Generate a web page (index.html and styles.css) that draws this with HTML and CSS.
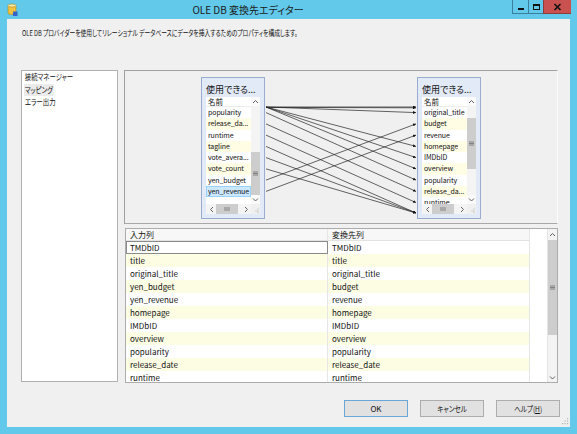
FILE: index.html
```html
<!DOCTYPE html>
<html lang="ja">
<head>
<meta charset="utf-8">
<title>OLE DB 変換先エディター</title>
<link rel="stylesheet" href="styles.css">
</head>
<body>
<div class="window">
  <div class="titlebar">
    <span class="app-icon">
      <svg width="11" height="13" viewBox="0 0 11 13">
        <path d="M1 2.5 V10 A4 1.5 0 0 0 9 10 V2.5" fill="#f0c23e" stroke="#a98a2c" stroke-width="0.6"/>
        <ellipse cx="5" cy="2.5" rx="4" ry="1.5" fill="#fae9a0" stroke="#a98a2c" stroke-width="0.6"/>
        <rect x="6" y="8.5" width="4.5" height="4.5" fill="#3563c9"/>
      </svg>
    </span>
    <span class="title">OLE DB 変換先エディター</span>
    <div class="caption">
      <span class="cb cb-min"><svg width="8" height="8" viewBox="0 0 8 8"><rect x="1" y="5" width="6" height="2" fill="#111"/></svg></span>
      <span class="cb cb-max"><svg width="9" height="8" viewBox="0 0 9 8"><rect x="1.5" y="1.5" width="6" height="5" fill="none" stroke="#111" stroke-width="1"/><rect x="1" y="1" width="7" height="2" fill="#111"/></svg></span>
      <span class="cb cb-close"><svg width="9" height="8" viewBox="0 0 9 8"><path d="M1.5 1 L7.5 7 M7.5 1 L1.5 7" stroke="#111" stroke-width="1.6"/></svg></span>
    </div>
  </div>

  <div class="client">
    <div class="desc"><span class="desc-text">OLE DB プロバイダーを使用してリレーショナル データベースにデータを挿入するためのプロパティを構成します。</span></div>

    <div class="main">
      <ul class="nav">
        <li><span class="nav-text">接続マネージャー</span></li>
        <li class="sel"><span class="nav-text">マッピング</span></li>
        <li><span class="nav-text">エラー出力</span></li>
      </ul>

      <div class="panel">
        <div class="diagram">
          <svg class="links" width="432" height="151" viewBox="0 0 432 151">
            <defs>
              <marker id="arr" markerWidth="3" markerHeight="3" refX="3" refY="1.5" orient="auto" markerUnits="userSpaceOnUse">
                <path d="M0 0 L3 1.5 L0 3 Z" fill="#111"/>
              </marker>
            </defs>
            <g stroke="#222" stroke-width="0.7" fill="none" marker-end="url(#arr)">
              <line x1="141" y1="36" x2="291" y2="36"/>
              <line x1="141" y1="36.4" x2="291" y2="36.8"/>
              <line x1="141" y1="36" x2="291" y2="41.6"/>
              <line x1="141" y1="36" x2="291" y2="75.4"/>
              <line x1="141" y1="36" x2="291" y2="86.6"/>
              <line x1="141" y1="36" x2="291" y2="97.9"/>
              <line x1="141" y1="41.6" x2="291" y2="109.1"/>
              <line x1="141" y1="52.9" x2="291" y2="120.4"/>
              <line x1="141" y1="64.1" x2="291" y2="131.6"/>
              <line x1="141" y1="75.4" x2="291" y2="142"/>
              <line x1="141" y1="86.6" x2="291" y2="142"/>
              <line x1="141" y1="97.9" x2="291" y2="142"/>
              <line x1="141" y1="109.1" x2="291" y2="52.9"/>
              <line x1="141" y1="120.4" x2="291" y2="64.1"/>
            </g>
          </svg>

          <div class="node node-left">
            <div class="node-title">使用できる...</div>
            <div class="node-body">
              <div class="node-list">
                <div class="node-items">
                  <div class="node-colhead">名前</div>
                  <div class="node-row">popularity</div>
                  <div class="node-row alt">release_da...</div>
                  <div class="node-row">runtime</div>
                  <div class="node-row alt">tagline</div>
                  <div class="node-row">vote_avera...</div>
                  <div class="node-row alt">vote_count</div>
                  <div class="node-row">yen_budget</div>
                  <div class="node-row selected">yen_revenue</div>
                </div>
                <div class="vs">
                  <span class="vs-arrow"><svg width="7" height="5" viewBox="0 0 7 5"><path d="M1 4 L3.5 1.5 L6 4" fill="none" stroke="#606060"/></svg></span>
                  <span class="vs-thumb"><svg width="5" height="5" viewBox="0 0 5 5"><path d="M0 1 H5 M0 2.5 H5 M0 4 H5" stroke="#707070" stroke-width="0.8"/></svg></span>
                  <span class="vs-fill"></span>
                  <span class="vs-arrow"><svg width="7" height="5" viewBox="0 0 7 5"><path d="M1 1.5 L3.5 4 L6 1.5" fill="none" stroke="#606060"/></svg></span>
                </div>
              </div>
              <div class="hs">
                <span class="hs-arrow"><svg width="5" height="7" viewBox="0 0 5 7"><path d="M4 1 L1.5 3.5 L4 6" fill="none" stroke="#606060"/></svg></span>
                <span class="hs-thumb"><svg width="6" height="4" viewBox="0 0 6 4"><path d="M1 0 V4 M3 0 V4 M5 0 V4" stroke="#707070" stroke-width="0.8"/></svg></span>
                <span class="hs-fill"></span>
                <span class="hs-arrow"><svg width="5" height="7" viewBox="0 0 5 7"><path d="M1 1 L3.5 3.5 L1 6" fill="none" stroke="#606060"/></svg></span>
                <span class="hs-corner"><svg width="5" height="5" viewBox="0 0 5 5"><rect x="3.5" y="0.5" width="1" height="1" fill="#b0b0b0"/><rect x="1.5" y="2.5" width="1" height="1" fill="#b0b0b0"/><rect x="3.5" y="2.5" width="1" height="1" fill="#b0b0b0"/><rect x="3.5" y="4" width="1" height="1" fill="#b0b0b0"/></svg></span>
              </div>
            </div>
          </div>

          <div class="node node-right">
            <div class="node-title">使用できる...</div>
            <div class="node-body">
              <div class="node-list">
                <div class="node-items">
                  <div class="node-colhead">名前</div>
                  <div class="node-row">original_title</div>
                  <div class="node-row alt">budget</div>
                  <div class="node-row">revenue</div>
                  <div class="node-row alt">homepage</div>
                  <div class="node-row">IMDbID</div>
                  <div class="node-row alt">overview</div>
                  <div class="node-row">popularity</div>
                  <div class="node-row alt">release_da...</div>
                  <div class="node-row">runtime</div>
                </div>
                <div class="vs">
                  <span class="vs-arrow"><svg width="7" height="5" viewBox="0 0 7 5"><path d="M1 4 L3.5 1.5 L6 4" fill="none" stroke="#606060"/></svg></span>
                  <span class="vs-thumb"><svg width="5" height="5" viewBox="0 0 5 5"><path d="M0 1 H5 M0 2.5 H5 M0 4 H5" stroke="#707070" stroke-width="0.8"/></svg></span>
                  <span class="vs-fill"></span>
                  <span class="vs-arrow"><svg width="7" height="5" viewBox="0 0 7 5"><path d="M1 1.5 L3.5 4 L6 1.5" fill="none" stroke="#606060"/></svg></span>
                </div>
              </div>
              <div class="hs">
                <span class="hs-arrow"><svg width="5" height="7" viewBox="0 0 5 7"><path d="M4 1 L1.5 3.5 L4 6" fill="none" stroke="#606060"/></svg></span>
                <span class="hs-thumb"><svg width="6" height="4" viewBox="0 0 6 4"><path d="M1 0 V4 M3 0 V4 M5 0 V4" stroke="#707070" stroke-width="0.8"/></svg></span>
                <span class="hs-fill"></span>
                <span class="hs-arrow"><svg width="5" height="7" viewBox="0 0 5 7"><path d="M1 1 L3.5 3.5 L1 6" fill="none" stroke="#606060"/></svg></span>
                <span class="hs-corner"><svg width="5" height="5" viewBox="0 0 5 5"><rect x="3.5" y="0.5" width="1" height="1" fill="#b0b0b0"/><rect x="1.5" y="2.5" width="1" height="1" fill="#b0b0b0"/><rect x="3.5" y="2.5" width="1" height="1" fill="#b0b0b0"/><rect x="3.5" y="4" width="1" height="1" fill="#b0b0b0"/></svg></span>
              </div>
            </div>
          </div>
        </div>

        <div class="grid">
          <div class="grid-table">
            <div class="grid-head">
              <span class="cell">入力列</span>
              <span class="cell">変換先列</span>
            </div>
            <div class="grid-row"><span class="cell editing">TMDbID</span><span class="cell">TMDbID</span></div>
            <div class="grid-row alt"><span class="cell">title</span><span class="cell">title</span></div>
            <div class="grid-row"><span class="cell">original_title</span><span class="cell">original_title</span></div>
            <div class="grid-row alt"><span class="cell">yen_budget</span><span class="cell">budget</span></div>
            <div class="grid-row"><span class="cell">yen_revenue</span><span class="cell">revenue</span></div>
            <div class="grid-row alt"><span class="cell">homepage</span><span class="cell">homepage</span></div>
            <div class="grid-row"><span class="cell">IMDbID</span><span class="cell">IMDbID</span></div>
            <div class="grid-row alt"><span class="cell">overview</span><span class="cell">overview</span></div>
            <div class="grid-row"><span class="cell">popularity</span><span class="cell">popularity</span></div>
            <div class="grid-row alt"><span class="cell">release_date</span><span class="cell">release_date</span></div>
            <div class="grid-row"><span class="cell">runtime</span><span class="cell">runtime</span></div>
          </div>
          <div class="gvs">
            <span class="gvs-up"><svg width="7" height="5" viewBox="0 0 7 5"><path d="M1 4 L3.5 1.5 L6 4" fill="none" stroke="#606060"/></svg></span>
            <span class="gvs-thumb"><svg width="5" height="5" viewBox="0 0 5 5"><path d="M0 1 H5 M0 2.5 H5 M0 4 H5" stroke="#707070" stroke-width="0.8"/></svg></span>
            <span class="gvs-fill"></span>
            <span class="gvs-down"><svg width="7" height="5" viewBox="0 0 7 5"><path d="M1 1.5 L3.5 4 L6 1.5" fill="none" stroke="#606060"/></svg></span>
          </div>
        </div>
      </div>
    </div>

    <div class="actions">
      <span class="btn btn-default">OK</span>
      <span class="btn"><span class="btn-text">キャンセル</span></span>
      <span class="btn"><span class="btn-text">ヘルプ(<u>H</u>)</span></span>
    </div>

    <span class="grip"><svg width="8" height="8" viewBox="0 0 8 8"><g fill="#b4b4b4"><rect x="6" y="0" width="1.2" height="1.2"/><rect x="3.5" y="2.5" width="1.2" height="1.2"/><rect x="6" y="2.5" width="1.2" height="1.2"/><rect x="1" y="5" width="1.2" height="1.2"/><rect x="3.5" y="5" width="1.2" height="1.2"/><rect x="6" y="5" width="1.2" height="1.2"/></g></svg></span>
  </div>
</div>
</body>
</html>
```

FILE: styles.css
```css
* { box-sizing: border-box; }

html, body {
  margin: 0;
  padding: 0;
}

body {
  width: 577px;
  height: 434px;
  overflow: hidden;
  font-family: "Noto Sans CJK JP", "Noto Sans", sans-serif;
  font-feature-settings: "palt";
  color: #111;
}

.window {
  width: 577px;
  height: 434px;
  background: #62c9ea;
  display: flex;
  flex-direction: column;
}

/* title bar */
.titlebar {
  height: 19px;
  display: flex;
  align-items: flex-start;
  flex-shrink: 0;
}

.app-icon {
  margin: 3px 0 0 7px;
  width: 11px;
  height: 13px;
  display: flex;
}

.title {
  flex: 1;
  text-align: center;
  font-size: 10px;
  line-height: 19px;
  color: #1a1a1a;
  padding-right: 34px;
}

.caption {
  display: flex;
  margin-right: 6px;
}

.cb {
  height: 14px;
  display: flex;
  align-items: center;
  justify-content: center;
  border-left: 1px solid #3b7f9f;
  border-bottom: 1px solid #3b7f9f;
}

.cb-min { width: 16px; }
.cb-max { width: 15px; }
.cb-close {
  width: 28px;
  background: #c9514f;
  border-left-color: #8e3b3a;
  border-bottom-color: #8e3b3a;
}

/* client */
.client {
  flex: 1;
  margin: 0 7px 7px 7px;
  background: #f0f0f0;
  display: flex;
  flex-direction: column;
  position: relative;
}

.desc {
  height: 51px;
  padding: 9px 0 0 15px;
  font-size: 8px;
  line-height: 10px;
  white-space: nowrap;
}

.desc-text {
  display: inline-block;
  transform: scaleX(0.72);
  transform-origin: left center;
}

.main {
  display: flex;
  gap: 6px;
  padding-left: 14px;
  height: 313px;
}

.nav {
  width: 97px;
  height: 312px;
  margin: 0;
  padding: 0 0 0 2px;
  list-style: none;
  background: #fff;
  border: 1px solid #b0b0b0;
}

.nav li {
  height: 12.5px;
  line-height: 12.5px;
  font-size: 8px;
  white-space: nowrap;
}

.nav-text {
  display: inline-block;
  padding: 0 1px;
  transform: scaleX(0.8);
  transform-origin: left center;
}

.nav li.sel .nav-text {
  background: #ebebeb;
}

/* mapping panel */
.panel {
  width: 434px;
  display: flex;
  flex-direction: column;
  gap: 4px;
}

.diagram {
  position: relative;
  height: 154px;
  border-top: 1px solid #a0a0a0;
  border-left: 1px solid #a0a0a0;
  border-right: 1px solid #fbfbfb;
  border-bottom: 1px solid #a8a8a8;
}

.links {
  position: absolute;
  left: 0;
  top: 0;
}

.node {
  position: absolute;
  top: 6px;
  width: 64px;
  height: 142px;
  border: 1px solid #9aaccd;
  background: #e2eaf8;
  display: flex;
  flex-direction: column;
}

.node-left { left: 76px; }
.node-right { left: 292px; }

.node-title {
  height: 19px;
  padding: 6px 0 0 4px;
  font-size: 9px;
  line-height: 12px;
  white-space: nowrap;
  color: #111;
}

.node-body {
  margin: 0 4px;
  height: 117px;
  background: #fff;
  display: flex;
  flex-direction: column;
}

.node-list {
  height: 107px;
  display: flex;
}

.node-items {
  flex: 1;
  min-width: 0;
  overflow: hidden;
}

.node-colhead {
  height: 10px;
  font-size: 7.5px;
  line-height: 10px;
  padding-left: 2px;
  border-bottom: 1px solid #ececec;
}

.node-row {
  height: 11.25px;
  font-size: 7px;
  line-height: 11.25px;
  padding-left: 2px;
  white-space: nowrap;
  overflow: hidden;
  letter-spacing: -0.1px;
}

.node-row.alt { background: #fffde3; }

.node-row.selected {
  background: #cce8ff;
  outline: 1px solid #99d1ff;
  outline-offset: -1px;
}

.vs {
  width: 9px;
  flex-shrink: 0;
  display: flex;
  flex-direction: column;
  background: #f4f4f4;
}

.vs-arrow {
  height: 9px;
  display: flex;
  align-items: center;
  justify-content: center;
  background: #fafafa;
}

.vs-thumb {
  background: #cdcdcd;
  display: flex;
  align-items: center;
  justify-content: center;
}

.vs-fill { flex: 1; }

.node-left .vs-thumb { margin-top: 46px; height: 43px; }
.node-right .vs-thumb { margin-top: 12px; height: 51px; }

.hs {
  height: 10px;
  display: flex;
  background: #f4f4f4;
}

.hs-arrow {
  width: 10px;
  display: flex;
  align-items: center;
  justify-content: center;
}

.hs-thumb {
  width: 22px;
  background: #cdcdcd;
  display: flex;
  align-items: center;
  justify-content: center;
}

.hs-fill { flex: 1; }

.hs-corner {
  width: 9px;
  display: flex;
  align-items: flex-end;
  justify-content: flex-end;
  padding: 0 1px 1px 0;
  background: #f0f0f0;
}

/* grid */
.grid {
  height: 155px;
  margin-left: 1px;
  border: 1px solid #acacac;
  background: #fff;
  display: flex;
}

.grid-table {
  flex: 1;
  overflow: hidden;
}

.grid-head,
.grid-row {
  display: flex;
}

.grid-head {
  height: 12px;
}

.grid-head .cell {
  background: #f7f7f7;
  line-height: 12px;
  border-bottom: 1px solid #e2e2e2;
}

.grid-row {
  height: 13px;
}

.cell {
  width: 202px;
  height: 100%;
  font-size: 8px;
  line-height: 13px;
  padding-left: 4px;
  border-right: 1px solid #e6e6e6;
  white-space: nowrap;
  overflow: hidden;
}

.grid-row.alt .cell { background: #fdfde4; }

.cell.editing {
  outline: 1px solid #8a8a8a;
  outline-offset: -1px;
  background: #fff;
}

.gvs {
  width: 10px;
  display: flex;
  flex-direction: column;
  background: #f3f3f3;
  border-left: 1px solid #e4e4e4;
}

.gvs-up,
.gvs-down {
  display: flex;
  align-items: center;
  justify-content: center;
}

.gvs-up { height: 11px; }
.gvs-down { height: 10px; }

.gvs-thumb {
  height: 95px;
  background: #cdcdcd;
  display: flex;
  align-items: center;
  justify-content: center;
}

.gvs-fill { flex: 1; }

/* buttons */
.actions {
  display: flex;
  justify-content: flex-end;
  gap: 12px;
  padding-right: 10px;
  margin-top: 17px;
}

.btn {
  width: 64px;
  height: 17px;
  border: 1px solid #adadad;
  background: #e1e1e1;
  font-size: 8px;
  display: flex;
  align-items: center;
  justify-content: center;
  color: #111;
}

.btn-text {
  display: inline-block;
  transform: scaleX(0.82);
}

.btn-default {
  border-color: #6aa6d8;
}

.grip {
  position: absolute;
  right: 1px;
  bottom: 1px;
  display: flex;
}
```
